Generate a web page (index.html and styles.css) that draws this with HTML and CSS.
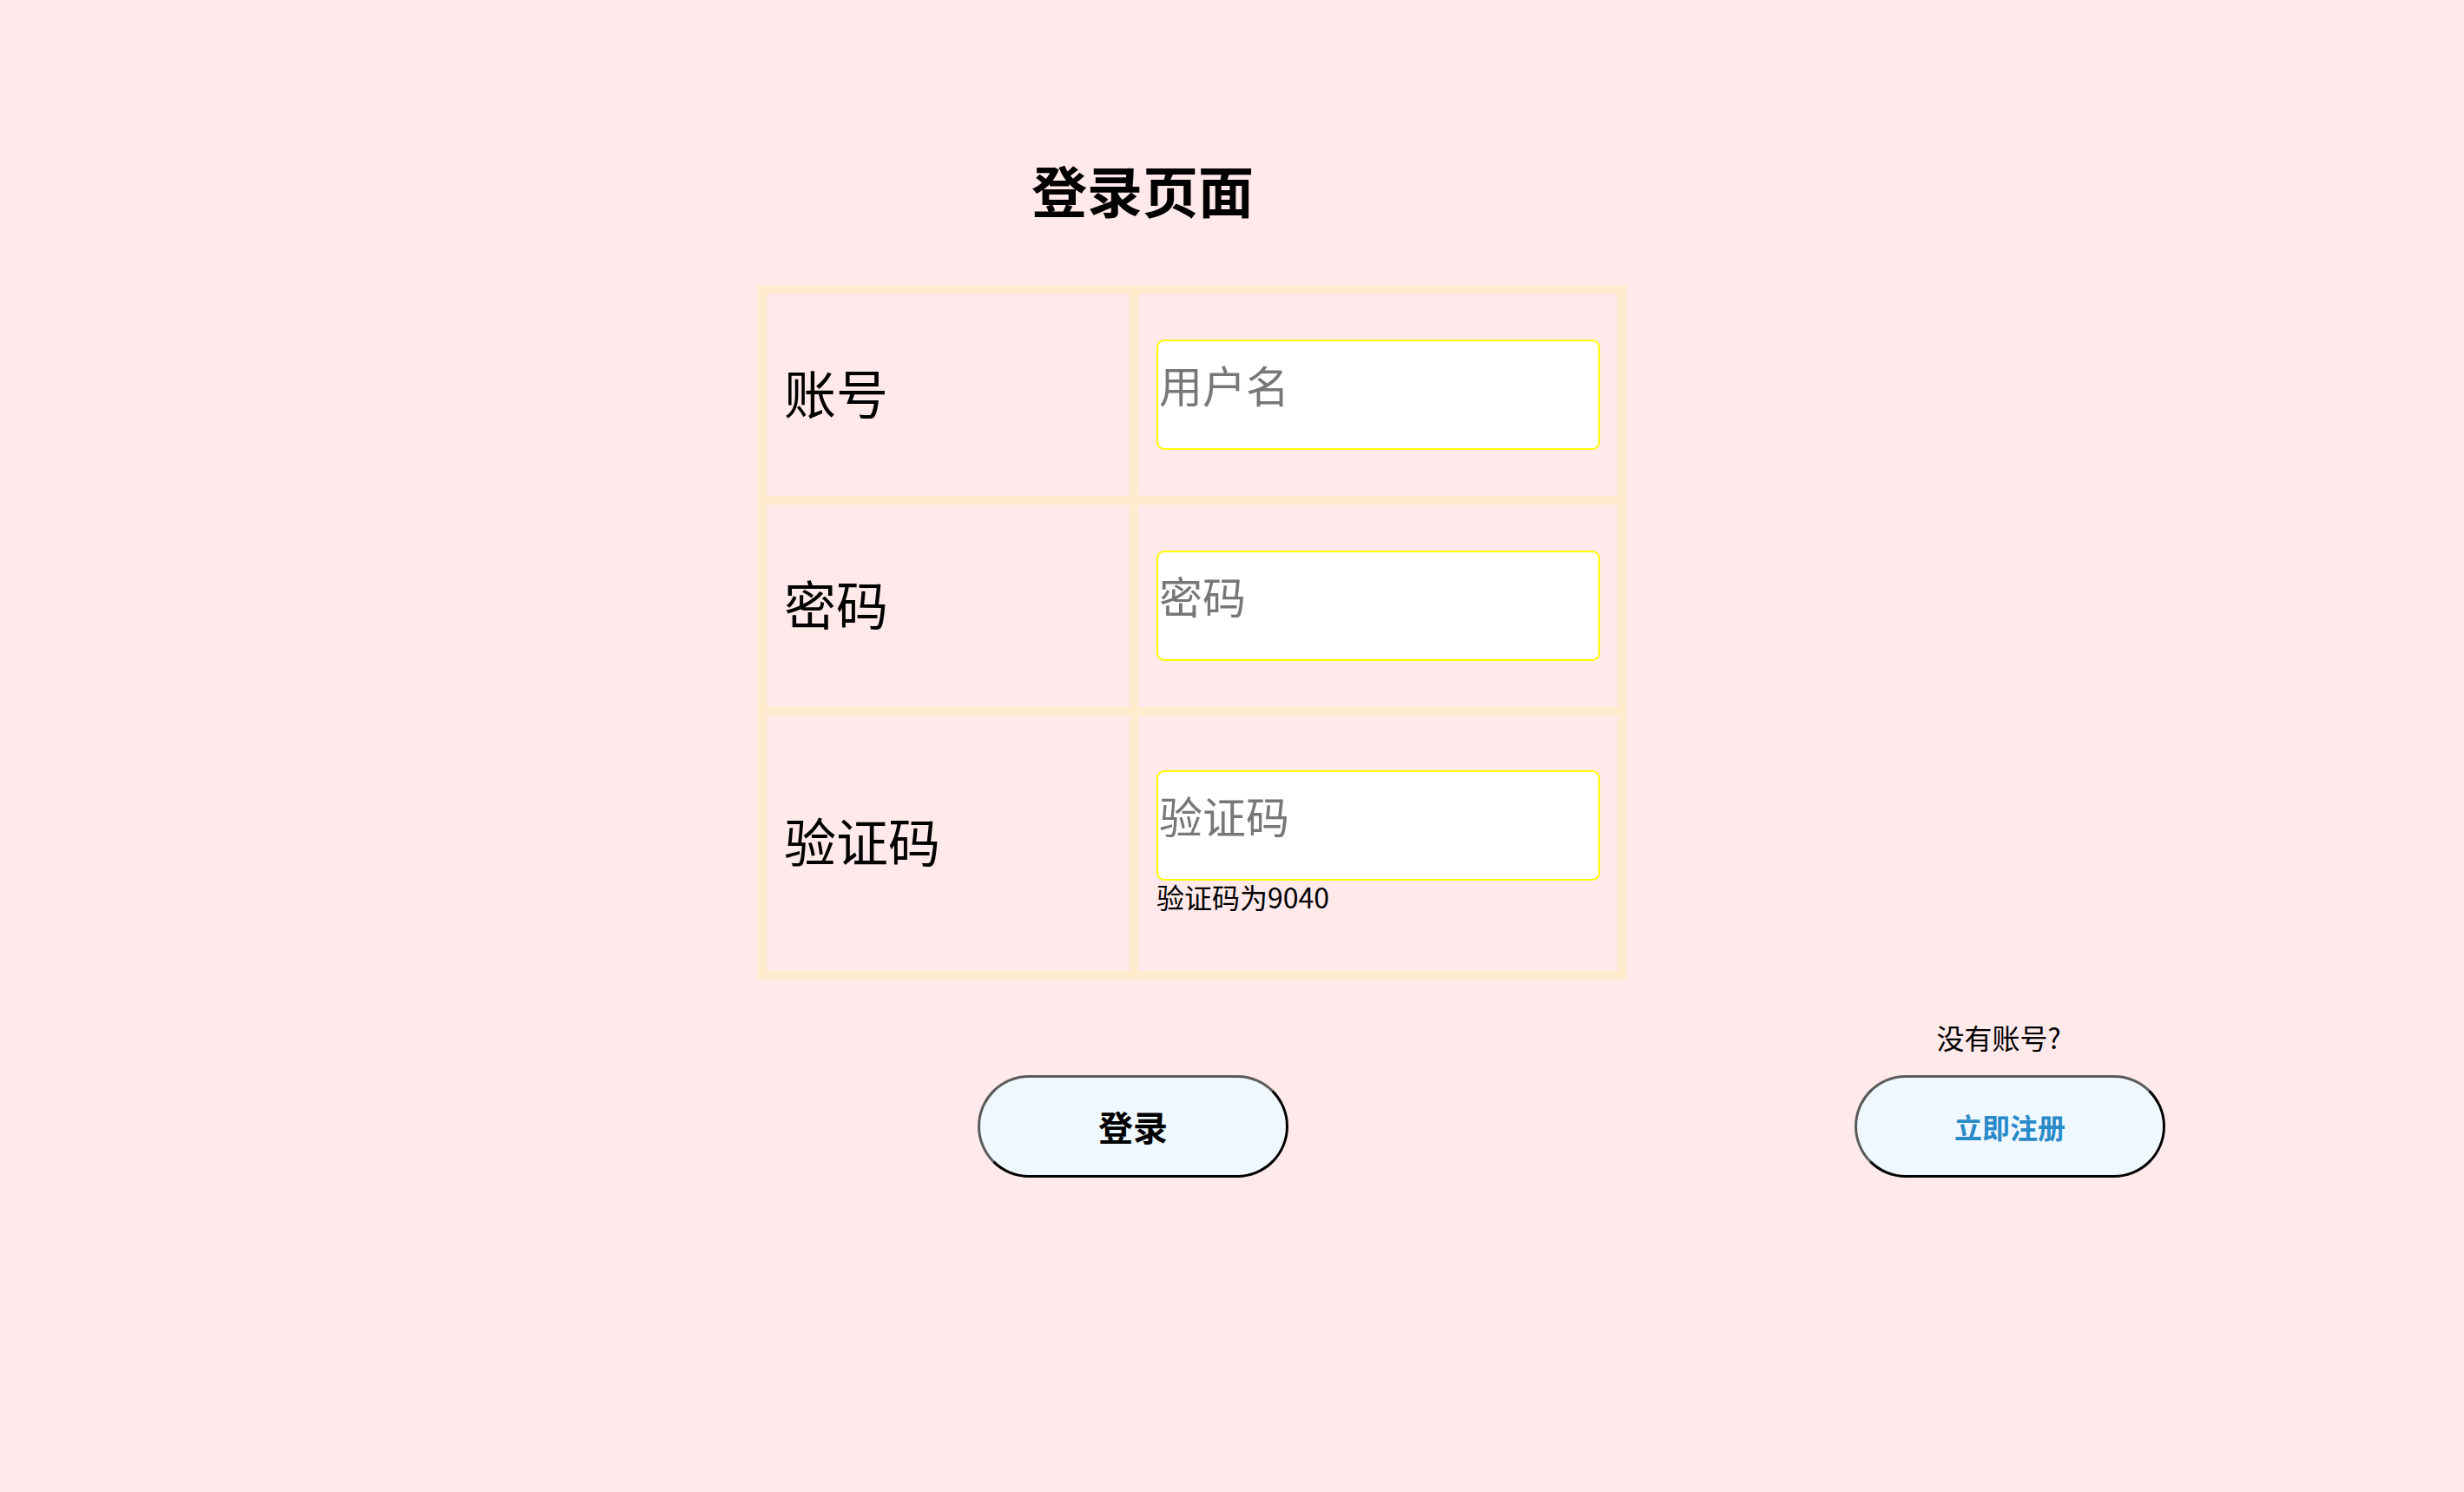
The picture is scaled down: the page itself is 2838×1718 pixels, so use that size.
FILE: index.html
```html
<!DOCTYPE html>
<html lang="zh-CN">
<head>
<meta charset="utf-8">
<title>登录页面</title>
<link rel="stylesheet" href="styles.css">
</head>
<body>
<div class="page">
  <h1 class="title">登录页面</h1>
  <table class="login-table">
    <tr>
      <td><div class="cell label-cell short">账号</div></td>
      <td><div class="cell field-cell short"><input class="field" type="text" placeholder="用户名"></div></td>
    </tr>
    <tr>
      <td><div class="cell label-cell short">密码</div></td>
      <td><div class="cell field-cell short"><input class="field" type="password" placeholder="密码"></div></td>
    </tr>
    <tr>
      <td><div class="cell label-cell tall">验证码</div></td>
      <td><div class="cell field-cell tall"><input class="field" type="text" placeholder="验证码"><div class="hint">验证码为9040</div></div></td>
    </tr>
  </table>
  <div class="actions">
    <button class="btn btn-login">登录</button>
    <div class="register-col">
      <div class="no-account">没有账号?</div>
      <button class="btn btn-register">立即注册</button>
    </div>
  </div>
</div>
</body>
</html>
```
FILE: styles.css
```css
html, body {
  margin: 0;
  padding: 0;
}
body {
  background: #ffe9ea;
  font-family: "Noto Sans CJK SC", "Noto Sans", sans-serif;
  color: #000;
  min-height: 1718px;
}
.page {
  padding: 185px 0 0 873px;
}
.title {
  width: 886px;
  margin: 0 0 79px 0;
  text-align: center;
  font-size: 64px;
  line-height: 1;
  font-weight: 700;
}
.login-table {
  border: 5px solid #ffebcd;
  border-spacing: 0;
  border-collapse: separate;
}
.login-table td {
  border: 5px solid #ffebcd;
  padding: 0;
}
.cell {
  display: flex;
  flex-direction: column;
  justify-content: center;
  box-sizing: border-box;
}
.short {
  height: 233px;
}
.tall {
  height: 294px;
}
.label-cell {
  width: 418px;
  padding: 0 20px 8px 20px;
  font-size: 60px;
  line-height: 1.2;
}
.field-cell {
  width: 552px;
  padding: 0 20px 0 21px;
}
.field {
  box-sizing: border-box;
  width: 100%;
  height: 127px;
  margin: 0;
  padding: 0 1px 26px 1px;
  border: 2px solid #ffff00;
  border-radius: 9px;
  background: #fff;
  font-family: "Noto Sans CJK SC", "Noto Sans", sans-serif;
  font-size: 50px;
  outline: none;
}
.field::placeholder {
  color: #777;
}
.hint {
  font-size: 32px;
  line-height: normal;
  margin-top: -5px;
}
.actions {
  display: flex;
  align-items: flex-end;
  margin-top: 50px;
}
.btn {
  box-sizing: border-box;
  width: 358px;
  height: 118px;
  border: 3px solid #000;
  border-top-color: #5a5a5a;
  border-left-color: #5a5a5a;
  border-radius: 59px;
  background: #f0f8ff;
  font-family: "Noto Sans CJK SC", "Noto Sans", sans-serif;
  font-weight: 700;
  padding: 0;
  cursor: pointer;
}
.btn-login {
  margin-left: 253px;
  font-size: 40px;
  color: #000;
}
.register-col {
  margin-left: 652px;
  width: 358px;
  display: flex;
  flex-direction: column;
  align-items: center;
}
.no-account {
  font-size: 32px;
  line-height: 1;
  padding-right: 26px;
  margin-bottom: 28px;
}
.btn-register {
  font-size: 32px;
  color: #2a8bc9;
}
```
